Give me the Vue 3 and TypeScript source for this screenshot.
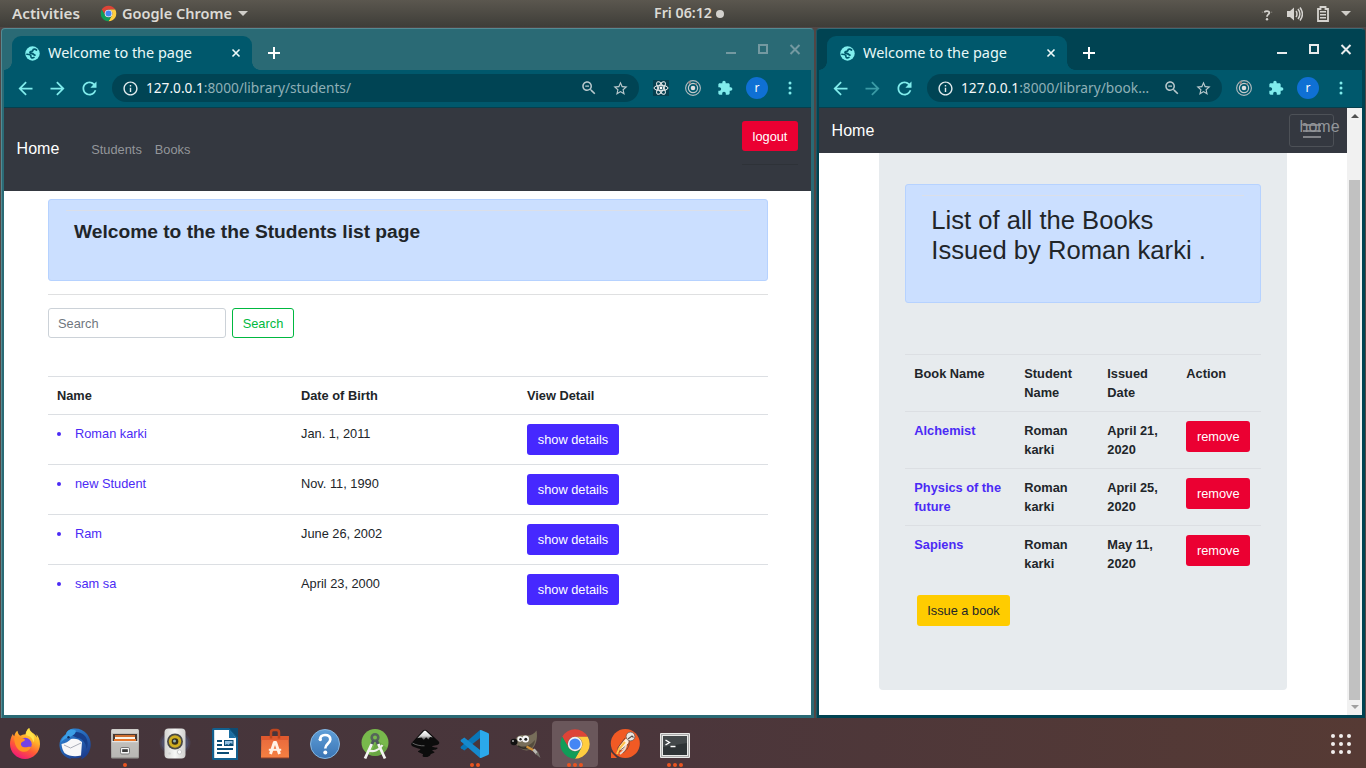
<script setup lang="ts">
interface BrowserWindow {
  kind: 'students' | 'books'
  path: string
  pathWidth: number
  active: boolean
}
interface Student { name: string; dob: string }
interface IssuedBook { title: string; date: string }
interface DockItem { icon: string; running: number; focused?: boolean }

const windows: BrowserWindow[] = [
  { kind: 'students', path: ':8000/library/students/', pathWidth: 205, active: false },
  { kind: 'books', path: ':8000/library/book…', pathWidth: 188, active: true },
]

const students: Student[] = [
  { name: 'Roman karki', dob: 'Jan. 1, 2011' },
  { name: 'new Student', dob: 'Nov. 11, 1990' },
  { name: 'Ram', dob: 'June 26, 2002' },
  { name: 'sam sa', dob: 'April 23, 2000' },
]

const books: IssuedBook[] = [
  { title: 'Alchemist', date: 'April 21, 2020' },
  { title: 'Physics of the future', date: 'April 25, 2020' },
  { title: 'Sapiens', date: 'May 11, 2020' },
]

const dock: DockItem[] = [
  { icon: 'firefox', running: 0 },
  { icon: 'thunderbird', running: 0 },
  { icon: 'files', running: 1 },
  { icon: 'rhythmbox', running: 0 },
  { icon: 'writer', running: 0 },
  { icon: 'software', running: 0 },
  { icon: 'help', running: 0 },
  { icon: 'studio', running: 0 },
  { icon: 'inkscape', running: 0 },
  { icon: 'vscode', running: 2 },
  { icon: 'gimp', running: 0 },
  { icon: 'chrome', running: 3, focused: true },
  { icon: 'postman', running: 0 },
  { icon: 'terminal', running: 3 },
]
</script>

<template>
  <div class="screen">
    <svg class="defs" width="0" height="0" aria-hidden="true">
      <defs>
        <linearGradient id="ffBody" x1="0.8" y1="0" x2="0.3" y2="1">
          <stop offset="0" stop-color="#fff14a" /><stop offset="0.35" stop-color="#ffb02a" />
          <stop offset="0.65" stop-color="#ff5a36" /><stop offset="1" stop-color="#f0147c" />
        </linearGradient>
        <linearGradient id="tbBody" x1="0" y1="0" x2="0.6" y2="1">
          <stop offset="0" stop-color="#2f8fe0" /><stop offset="1" stop-color="#1d3f8f" />
        </linearGradient>
        <linearGradient id="cabinet" x1="0" y1="0" x2="0" y2="1">
          <stop offset="0" stop-color="#c9c8c5" /><stop offset="1" stop-color="#9c9a97" />
        </linearGradient>
        <linearGradient id="speaker" x1="0" y1="0" x2="1" y2="0">
          <stop offset="0" stop-color="#d4d4d2" /><stop offset="0.5" stop-color="#f7f7f6" /><stop offset="1" stop-color="#d0d0ce" />
        </linearGradient>
        <linearGradient id="bag" x1="0" y1="0" x2="0" y2="1">
          <stop offset="0" stop-color="#e8683c" /><stop offset="1" stop-color="#f58042" />
        </linearGradient>
        <linearGradient id="helpBlue" x1="0" y1="0" x2="0" y2="1">
          <stop offset="0" stop-color="#5f9fd8" /><stop offset="1" stop-color="#3a74b4" />
        </linearGradient>
        <linearGradient id="mountain" x1="0" y1="0" x2="0" y2="1">
          <stop offset="0" stop-color="#ffffff" /><stop offset="0.55" stop-color="#d8d8d8" /><stop offset="1" stop-color="#3a3a3a" />
        </linearGradient>
      </defs>

      <symbol id="chrome" viewBox="0 0 48 48">
        <path fill="#dd4437" d="M24 13H43.05A22 22 0 0 0 4.95 13L14.47 29.5A11 11 0 0 1 24 13z" />
        <path fill="#ffcd40" d="M43.05 13H24A11 11 0 0 1 33.53 29.5L24 46A22 22 0 0 0 43.05 13z" />
        <path fill="#109d58" d="M4.95 13A22 22 0 0 0 24 46L33.53 29.5A11 11 0 0 1 14.47 29.5z" />
        <circle cx="24" cy="24" r="10.8" fill="#f1f1f1" />
        <circle cx="24" cy="24" r="8.4" fill="#4486f4" />
      </symbol>

      <symbol id="globe" viewBox="0 0 16 16">
        <circle cx="8" cy="8" r="7.7" fill="#80eeee" />
        <path d="M12.300 4.300C10.800 3 8.600 3 8.400 4.700c-.2 1.500-2.400.8-3 1.900-.4 1 .5 1.300 2 1.400 1.800.1 1.700 1.600 3.200 1.700" fill="none" stroke="#00586c" stroke-width="1.900" stroke-linecap="round" />
        <path d="M2 8.800c1.600.1 3.600.2 4.100 1.200.4.900-.1 1.700.7 2.300.7.500 2 .3 2.800-.2" fill="none" stroke="#00586c" stroke-width="1.700" stroke-linecap="round" />
      </symbol>
      <symbol id="back" viewBox="0 0 24 24"><path d="M20 11H7.83l5.59-5.59L12 4l-8 8 8 8 1.41-1.41L7.83 13H20v-2z" /></symbol>
      <symbol id="forward" viewBox="0 0 24 24"><path d="M4 11h12.17l-5.59-5.59L12 4l8 8-8 8-1.41-1.41L16.17 13H4v-2z" /></symbol>
      <symbol id="reload" viewBox="0 0 24 24"><path d="M17.65 6.35C16.2 4.9 14.21 4 12 4c-4.42 0-7.99 3.58-7.99 8s3.57 8 7.99 8c3.73 0 6.84-2.55 7.73-6h-2.08c-.82 2.33-3.04 4-5.65 4-3.31 0-6-2.69-6-6s2.69-6 6-6c1.66 0 3.14.69 4.22 1.78L13 11h7V4l-2.35 2.35z" /></symbol>
      <symbol id="info" viewBox="0 0 24 24"><path d="M11 17h2v-6h-2v6zm1-15C6.48 2 2 6.48 2 12s4.48 10 10 10 10-4.48 10-10S17.52 2 12 2zm0 18c-4.41 0-8-3.59-8-8s3.59-8 8-8 8 3.590 8 8-3.590 8-8 8zM11 9h2V7h-2v2z" /></symbol>
      <symbol id="zoomout" viewBox="0 0 24 24"><path d="M15.5 14h-.79l-.28-.27C15.41 12.59 16 11.11 16 9.5 16 5.91 13.09 3 9.5 3S3 5.91 3 9.5 5.91 16 9.5 16c1.61 0 3.09-.59 4.23-1.57l.27.28v.79l5 4.99L20.49 19l-4.99-5zm-6 0C7.01 14 5 11.99 5 9.5S7.01 5 9.5 5 14 7.01 14 9.5 11.99 14 9.5 14zM7 8.8h5v1.4H7z" /></symbol>
      <symbol id="star" viewBox="0 0 24 24"><path d="M22 9.24l-7.19-.62L12 2 9.19 8.63 2 9.24l5.46 4.73L5.82 21 12 17.27 18.18 21l-1.63-7.03L22 9.24zM12 15.4l-3.76 2.27 1-4.28-3.32-2.88 4.38-.38L12 6.1l1.71 4.04 4.38.38-3.32 2.88 1 4.28L12 15.4z" /></symbol>
      <symbol id="puzzle" viewBox="0 0 24 24"><path d="M20.5 11H19V7c0-1.1-.9-2-2-2h-4V3.5C13 2.12 11.88 1 10.5 1S8 2.12 8 3.5V5H4c-1.1 0-1.99.9-1.99 2v3.8H3.5c1.49 0 2.7 1.21 2.7 2.7s-1.21 2.7-2.7 2.7H2V20c0 1.1.9 2 2 2h3.8v-1.5c0-1.49 1.21-2.7 2.7-2.7 1.49 0 2.7 1.21 2.7 2.7V22H17c1.1 0 2-.9 2-2v-4h1.5c1.38 0 2.5-1.12 2.5-2.5S21.88 11 20.5 11z" /></symbol>
      <symbol id="react" viewBox="0 0 16 16">
        <rect width="16" height="16" fill="#063f4f" />
        <g fill="none" stroke="#f0f0f0" stroke-width="1">
          <ellipse cx="8" cy="8" rx="7" ry="2.7" />
          <ellipse cx="8" cy="8" rx="7" ry="2.7" transform="rotate(60 8 8)" />
          <ellipse cx="8" cy="8" rx="7" ry="2.7" transform="rotate(120 8 8)" />
        </g>
        <circle cx="8" cy="8" r="1.4" fill="#fff" />
      </symbol>
      <symbol id="rings" viewBox="0 0 16 16">
        <circle cx="8" cy="8" r="7.4" fill="none" stroke="#b3bcbf" stroke-width="1.1" />
        <circle cx="8" cy="8" r="4.6" fill="none" stroke="#c3c9cb" stroke-width="1.2" />
        <circle cx="8" cy="8" r="2.3" fill="#dedede" />
        <circle cx="4.6" cy="2.6" r="1.3" fill="#8f7f7e" /><circle cx="11" cy="4" r="1" fill="#8f7f7e" />
      </symbol>

      <symbol id="firefox" viewBox="0 0 32 32">
        <path fill="url(#ffBody)" d="M20.2 0c-2.7 2-3.4 4.3-3.7 6.2-2.2.1-3.8.7-5 1.6C9.600 6.700 8.700 5 8.500 2.700 6.500 4 5.600 6 5.300 8.200 4.200 7.500 3.900 6.500 3.900 5.800 1.600 9.600 1 13 1 16c0 8.300 6.700 15 15 15s15-6.700 15-15c0-4.500-1.700-8-3.600-9.800.3 1.200.4 2.300.3 3.200C25.600 4.800 21 4.500 20.200 0z" />
        <circle cx="16.200" cy="16.300" r="6.500" fill="#7542e5" />
        <path fill="#ff9324" d="M5.200 9c2.200-1 5-.4 6.500 1.100 2 .7 4 .3 4.200 1.600.2 1.500-3.300 1.700-3.900 3.700-.5 1.800 1 3.600 3.400 3.900 3 .4 4.500-1.200 6.900-.2-1.700 3.700-5 5.200-8.500 4.600C8.500 22.800 5 17 5.200 9z" />
        <path fill="#ffe34a" d="M20.200 0c-2.400 1.900-3.300 4.400-3 7.200 3.500.3 6.800 3 7 7.300 1.700-2.500 1.200-5.600.1-7.800C22.800 4.800 20.300 3.800 20.200 0z" />
      </symbol>
      <symbol id="thunderbird" viewBox="0 0 32 32">
        <path fill="url(#tbBody)" d="M10 2C16-1 24 1 28 6c4 5 5 12 2 18-1.500 3-4 5.500-8 7.500l1-3c-3 2-8 2.500-12 1l1.500 1.700C6 30 1 25 .5 18 .3 14 1.500 11 4 8.500 5 7.500 6 7 7 6c.5-1.800 1.500-3 3-4z" />
        <path fill="#173f8a" d="M10 6c5-3.500 12-2.500 16 2 3 4 3.500 9 1.500 13-.5-6-4-10.500-9-11z" />
        <path fill="#3b9fe6" d="M10.500 2c-2 .9-3.300 2.600-3.500 4.500C5 8.500 2.500 10.500 2 14c3-3.500 6.500-4 10-5.500 3-1.400 5-3.500 5-5.700-2-1.300-4.500-1.500-6.500-.8z" />
        <path fill="#f7f7f8" d="M2.500 16c4-.5 7-2.500 9.500-5 4-1 8 0 11 3l-1 13.500c-6 1.500-12 .8-16.500-2.500C3.800 22.500 2.800 19.500 2.500 16z" />
        <path fill="none" stroke="#a9adb8" d="m5 17 6.500 3L22 15" />
        <circle cx="9.500" cy="9.300" r="1.200" fill="#10305e" />
      </symbol>
      <symbol id="files" viewBox="0 0 32 32">
        <rect x="2" y="1" width="28" height="29.500" rx="1.500" fill="url(#cabinet)" />
        <path fill="#d5d4d1" d="M3 1.500h26V5H3z" />
        <rect x="4" y="6" width="24" height="8" fill="#4a3b34" />
        <path fill="#cf6f30" d="M6 7h20v3H6z" /><path fill="#f8f3e9" d="M6 9h20v2H6z" /><path fill="#e8772b" d="M5 11h22v2H5z" />
        <path fill="#c6c5c2" d="M3 14h26v15H3z" opacity=".65" /><path fill="#e6e5e3" d="M3 13h26v1.200H3z" />
        <rect x="11.500" y="19.500" width="9" height="6.500" rx="1.300" fill="#f5f5f5" stroke="#777" />
        <rect x="13.200" y="21.200" width="5.600" height="2.800" fill="#3a3a3a" />
      </symbol>
      <symbol id="rhythmbox" viewBox="0 0 32 32">
        <ellipse cx="16" cy="15" rx="15.500" ry="12" fill="#55587a" opacity=".3" />
        <ellipse cx="16" cy="15" rx="13.500" ry="10" fill="#55608a" opacity=".45" />
        <rect x="5.500" y=".5" width="21" height="30" rx="4" fill="url(#speaker)" />
        <circle cx="16" cy="13.500" r="8" fill="#4a4a46" />
        <circle cx="16" cy="13.500" r="6.200" fill="#cfae22" />
        <circle cx="16" cy="13.500" r="3.300" fill="#332e1e" /><circle cx="15.500" cy="13" r="1.500" fill="#91b0ae" />
        <circle cx="20.500" cy="24" r="2.200" fill="#fafafa" stroke="#cbcbcb" />
        <circle cx="10.500" cy="25.500" r="1.200" fill="#d2d2d2" />
      </symbol>
      <symbol id="writer" viewBox="0 0 32 32">
        <path fill="#12608f" d="M3 1.500A1.500 1.500 0 0 1 4.500 0H29v32H4.500A1.500 1.500 0 0 1 3 30.500z" />
        <path fill="#fff" d="M5.200 2H20l7 8v20H5.200z" />
        <path fill="#0e4c73" d="M20 0h9v10z" /><path fill="#1a6da2" d="M20 1v9h7z" />
        <path fill="#0b4c74" d="M8 12h5v2H8zm0 4h5v2H8zm0 4h16v2H8zm0 4h12v2H8zM15 12h9.500v6H15z" />
        <path fill="#94bfe0" d="M16 13h7.500v3l-2-1-2 2-1.500-1-2 1z" />
      </symbol>
      <symbol id="software" viewBox="0 0 32 32">
        <path fill="url(#bag)" d="M2.300 8h27.400L30 30H2z" />
        <path fill="#df592e" d="M2.300 8h27.400v4H2.200z" />
        <path fill="none" stroke="#bd461f" stroke-width="2.500" d="M12 10.500V4.500A2.500 2.500 0 0 1 14.500 2h3A2.500 2.500 0 0 1 20 4.500v6" />
        <path fill="none" stroke="#fff3e7" stroke-width="2.900" stroke-linejoin="round" d="M11.500 26 15.300 14.500h1.400L20.500 26" />
        <path stroke="#fff3e7" stroke-width="2" d="M9.800 21.800h12.400" /><path fill="#8f3f28" d="M2 29.500h28v1H2z" />
      </symbol>
      <symbol id="help" viewBox="0 0 32 32">
        <circle cx="16" cy="16" r="14.500" fill="url(#helpBlue)" stroke="#85b7e2" />
        <path fill="none" stroke="#fff" stroke-width="2.700" d="M11 12c-.2-3.500 2-5 5-5 3.300 0 5.300 1.800 5.300 4.400 0 4-5 4.200-5 9.100" />
        <circle cx="16.300" cy="24.500" r="2" fill="#fff" /><circle cx="11.300" cy="11.500" r="1.700" fill="#fff" />
      </symbol>
      <symbol id="studio" viewBox="0 0 32 32">
        <circle cx="16" cy="14.500" r="13.500" fill="#78b94c" />
        <path fill="#5c983c" d="M18 12 28.300 20A13.500 13.500 0 0 1 11 27z" opacity=".55" />
        <circle cx="16" cy="9.500" r="3.300" fill="none" stroke="#55655a" stroke-width="2.600" />
        <path stroke="#4e585c" stroke-width="3" d="M14.500 12.500 12.500 17M17.500 12.500 19.500 17" />
        <path fill="none" stroke="#f4f4f2" stroke-width="2.800" d="M12.700 16 6 30.500M19.300 16 26 30.500" />
        <path fill="none" stroke="#f0f2ee" stroke-width="2.300" d="M9 22c5 2.500 11 .5 14.500-5" />
      </symbol>
      <symbol id="inkscape" viewBox="0 0 32 32">
        <path fill="#0c0c0c" d="M14 2.500c1.200-.9 2.900-.9 4 0l11.500 10.800c1.500 1.500.8 3-1.300 3.600l-5 1.200c-1 .6 2 1.500 5.300 1.700.6 1.400-3 2.200-5 2.300-.7.500 1 1.300 2 1.800 0 1.300-3 1.200-3.800 2.300-.3 1.800-2.700 2.900-5.200 2.900-2.600 0-3.600-1.200-2.600-2.100 1.200-1-1.800-1.500-4.500-3.100-1.500-.9 2-1.700 2-2.500 0-1-6.500-1.600-8.500-3.700-1-1.100-1-2.200.1-3.300z" />
        <path fill="url(#mountain)" d="M14.800 3.300c.8-.6 1.600-.6 2.400 0l6.600 6.200-2.800-.4-1.600 2.300-2.300-2.200-2.300 2.800-2.300-2.400-4.300.7z" />
        <path fill="none" stroke="#777" stroke-width=".8" d="M3.500 15c3 2 8 3 12 2.800" />
      </symbol>
      <symbol id="vscode" viewBox="0 0 32 32">
        <path fill="#0876b8" d="M22 2v7.200L5.300 22.500 2 20.200c-.6-.5-.5-1.200 0-1.700L21 2z" />
        <path fill="#1689cc" d="M22 30v-7.200L5.300 9.500 2 11.800c-.6.5-.5 1.200 0 1.700L21 30z" />
        <path fill="#2ba9eb" d="M22 2l7 3c.6.300 1 .8 1 1.500v19c0 .7-.4 1.300-1 1.500l-7 3c-.7.200-1 0-1-.6V2.600c0-.6.300-.8 1-.6z" />
      </symbol>
      <symbol id="gimp" viewBox="0 0 32 32">
        <path fill="#776e5a" d="M8 9c3-2.500 7-2 10-1.500 4 .1 7-1.600 9.500-5C29 10 27 18 22.500 21c-5 3-10.500 1-14-3.500L4 15z" />
        <path fill="#554d3e" d="M9 17c4 2.500 11 2 17-5-.4 5-3 9-7 9.700-4 .6-8-1.200-10-4.700z" />
        <ellipse cx="5" cy="14" rx="3.500" ry="3.300" fill="#111" /><circle cx="4" cy="13" r="1" fill="#aaa" />
        <circle cx="11" cy="11" r="2.700" fill="#f5f5f5" /><circle cx="16.500" cy="11" r="3.500" fill="#f5f5f5" />
        <circle cx="11.500" cy="11.300" r="1.200" fill="#222" /><circle cx="16.800" cy="11.300" r="1.500" fill="#222" />
        <path fill="none" stroke="#302d28" stroke-width="1.500" d="M9 18c3 2.500 7 2.500 10 1.300" />
        <path stroke="#d29338" stroke-width="2" d="M17.500 18.500 25 22.500" /><path stroke="#bbbab3" stroke-width="3" d="m24.500 21.500 3.500 4" /><path fill="#77746c" d="m29 23.500 2.500 6.500-5-4z" />
      </symbol>
      <symbol id="postman" viewBox="0 0 32 32">
        <circle cx="16.300" cy="15.500" r="14.500" fill="#f15a24" /><path fill="#f15a24" d="M2 24v6h6z" />
        <path fill="none" stroke="#fff1de" stroke-width="5" stroke-linecap="round" d="m17.500 13.500-5 6" />
        <path fill="none" stroke="#5c4a40" stroke-width=".8" d="m16 10-7 9.500-.5 6 3-3.500 8-6M20 13c1 5-2 9-6 12" />
        <path fill="none" stroke="#ffc34d" stroke-width="2" d="m16 14-6 7-2 5" />
        <circle cx="21.500" cy="8.500" r="4.400" fill="#ebe6e0" stroke="#6b5a50" stroke-width=".8" /><path fill="none" stroke="#534c47" stroke-width="1.100" d="m19 11 4-3 1.500 1.500" />
        <path fill="none" stroke="#e4ddd5" stroke-width="1.800" d="M17 17c0 4-2 6-6 9" />
      </symbol>
      <symbol id="terminal" viewBox="0 0 32 32">
        <rect x="1" y="5" width="30" height="25" rx="1" fill="#e9e9e7" />
        <rect x="2.500" y="6.500" width="27" height="22" fill="none" stroke="#aaa" />
        <rect x="4" y="8" width="24" height="19" fill="#2e3335" /><path fill="#43484a" d="M4 8h24v7L4 19z" />
        <path fill="none" stroke="#fff" stroke-width="1.400" d="m6.500 12 4 2.500-4 2.500M11.500 18.500h5" />
      </symbol>
    </svg>

    <header class="topbar">
      <div class="topbar-left">
        <svg width="68" height="27"><text class="ui strong" x="0" y="19" textLength="68" lengthAdjust="spacingAndGlyphs">Activities</text></svg>
        <svg class="app-icon" width="17" height="17"><use href="#chrome" /></svg>
        <svg width="111" height="27"><text class="ui strong" x="0" y="19" textLength="110" lengthAdjust="spacingAndGlyphs">Google Chrome</text></svg>
        <i class="caret"></i>
      </div>
      <div class="clock">
        <svg width="59" height="27"><text class="ui strong" x="0" y="18" textLength="58" lengthAdjust="spacingAndGlyphs">Fri 06:12</text></svg>
        <i class="dot"></i>
      </div>
      <div class="tray">
        <svg class="question" width="12" height="16" viewBox="0 0 12 16">
          <path d="M3.700 5.500c0-2 4.600-2 4.600.3C8.300 7.500 6 7.300 6 9.800" fill="none" stroke="#d5d3cf" stroke-width="1.800" />
          <circle cx="6" cy="12.300" r="1.200" fill="#d5d3cf" /><path d="M.8 5.200h1.200M10 5.200h1.200" stroke="#85827b" />
        </svg>
        <svg class="volume" width="17" height="16" viewBox="0 0 17 16">
          <path fill="#d5d3cf" d="M1 5h3l4-3.500v13L4 11H1z" /><path fill="none" stroke="#d5d3cf" stroke-width="1.500" d="M10 5c1.300 1.500 1.300 4.500 0 6M12 3c2.300 3 2.300 7 0 10M14 1.500c3 4 3 9 0 13" />
        </svg>
        <svg class="battery" width="12" height="16" viewBox="0 0 12 16">
          <path fill="none" stroke="#d5d3cf" stroke-width="1.800" d="M1 3h2.500V1h5v2H11v12H1z" /><path fill="#d5d3cf" d="M3 5h6v1.600H3zm0 3h6v1.600H3zm0 3h6v1.600H3z" />
        </svg>
        <i class="caret"></i>
      </div>
    </header>

    <main class="desktop">
      <section v-for="win in windows" :key="win.kind" class="window" :class="[win.kind, { active: win.active }]">
        <div class="tabstrip">
          <div class="tab">
            <svg width="15" height="15"><use href="#globe" /></svg>
            <svg class="tab-title" width="146" height="30"><text class="ui" x="0" y="19.500" textLength="144" lengthAdjust="spacingAndGlyphs">Welcome to the page</text></svg>
            <svg width="10" height="10" viewBox="0 0 10 10"><path d="m1.500 1.500 7 7m0-7-7 7" stroke="#eefafa" stroke-width="1.600" /></svg>
          </div>
          <svg class="new-tab" width="12" height="12" viewBox="0 0 12 12"><path d="M6 0v12M0 6h12" stroke="#fff" stroke-width="2" /></svg>
          <svg class="controls" width="76" height="14" viewBox="0 0 76 14">
            <path d="M0 10h10" stroke="currentColor" stroke-width="2" />
            <rect x="33" y="2" width="8" height="8" fill="none" stroke="currentColor" stroke-width="2" />
            <path d="m64.500 2 9 9m0-9-9 9" stroke="currentColor" stroke-width="2" />
          </svg>
        </div>

        <div class="toolbar">
          <div class="slot nudge"><svg width="21" height="21"><use href="#back" /></svg></div>
          <div class="slot nudge" :class="{ faded: win.active }"><svg width="21" height="21"><use href="#forward" /></svg></div>
          <div class="slot nudge"><svg width="21" height="21"><use href="#reload" /></svg></div>
          <div class="omnibox">
            <svg class="info" width="17" height="17"><use href="#info" /></svg>
            <svg class="url" height="28">
              <text class="ui address" x="0" y="19" :textLength="win.pathWidth" lengthAdjust="spacingAndGlyphs">127.0.0.1<tspan class="path">{{ win.path }}</tspan></text>
            </svg>
            <div class="slot nudge"><svg width="18" height="18"><use href="#zoomout" /></svg></div>
            <div class="slot nudge"><svg width="17" height="17"><use href="#star" /></svg></div>
          </div>
          <div v-if="win.kind === 'students'" class="slot"><svg width="16" height="16"><use href="#react" /></svg></div>
          <div class="slot"><svg width="16" height="16"><use href="#rings" /></svg></div>
          <div class="slot"><svg width="16" height="16"><use href="#puzzle" /></svg></div>
          <div class="slot"><span class="avatar">r</span></div>
          <div class="slot menu"><svg width="4" height="14" viewBox="0 0 4 14"><circle cx="2" cy="2" r="1.500" /><circle cx="2" cy="7" r="1.500" /><circle cx="2" cy="12" r="1.500" /></svg></div>
        </div>

        <div v-if="win.kind === 'students'" class="page">
          <nav class="nav tall">
            <span class="brand">Home</span>
            <span class="link first">Students</span>
            <span class="link">Books</span>
            <div class="logout"><button class="btn danger">logout</button><hr></div>
          </nav>
          <div class="container">
            <div class="alert welcome"><hr><h4>Welcome to the the Students list page</h4></div>
            <hr class="rule">
            <form class="search" @submit.prevent>
              <input type="text" placeholder="Search">
              <button class="btn outline">Search</button>
            </form>
            <div class="table">
              <div class="row head"><span>Name</span><span>Date of Birth</span><span>View Detail</span></div>
              <div v-for="s in students" :key="s.name" class="row">
                <span class="name"><i class="bullet"></i>{{ s.name }}</span>
                <span>{{ s.dob }}</span>
                <span><button class="btn primary">show details</button></span>
              </div>
            </div>
          </div>
        </div>

        <div v-else class="page split">
          <div class="view">
            <nav class="nav">
              <span class="brand">Home</span>
              <div class="toggler">
                <svg width="20" height="16" viewBox="0 0 20 16"><path d="M1 2h18M1 8h18M1 14h18" stroke="#9a9ca0" stroke-width="1.600" /></svg>
                <span class="toggler-text">home</span>
              </div>
            </nav>
            <div class="jumbotron">
              <div class="alert issued"><hr><h2>List of all the Books<br>Issued by Roman karki .</h2></div>
              <div class="table issued-table">
                <div class="row head"><span>Book Name</span><span>Student Name</span><span>Issued Date</span><span>Action</span></div>
                <div v-for="b in books" :key="b.title" class="row">
                  <span class="title">{{ b.title }}</span>
                  <span>Roman karki</span>
                  <span>{{ b.date }}</span>
                  <span><button class="btn danger">remove</button></span>
                </div>
              </div>
              <button class="btn warning">Issue a book</button>
            </div>
          </div>
          <div class="scrollbar">
            <i class="up"></i><div class="thumb"></div><i class="down"></i>
          </div>
        </div>
      </section>
    </main>

    <footer class="dock">
      <div v-for="item in dock" :key="item.icon" class="dock-item">
        <div class="tile" :class="{ focused: item.focused }">
          <svg width="32" height="32"><use :href="'#' + item.icon" /></svg>
          <div class="pips"><i v-for="n in item.running" :key="n"></i></div>
        </div>
      </div>
      <div class="apps"><i v-for="n in 9" :key="n"></i></div>
    </footer>
  </div>
</template>

<style>
body { margin: 0; overflow: hidden; background: #463a3b; }
</style>

<style scoped>
* { box-sizing: border-box; }
svg { display: block; flex: none; }
.defs { position: absolute; }
.screen { width: 1366px; height: 768px; display: flex; flex-direction: column; overflow: hidden; font-family: "Liberation Sans", Arial, sans-serif; font-size: 12.8px; color: #212529; background: #514645; }
.ui { font-family: "Noto Sans", "Open Sans", sans-serif; font-size: 14.5px; fill: #e8f8f8; }
.ui.strong { font-size: 14px; font-weight: 600; fill: #dcdad5; }

.topbar { height: 27px; flex: none; display: flex; align-items: center; background: linear-gradient(#5b574f, #3e3d38); }
.topbar-left { width: 654px; display: flex; align-items: center; padding-left: 12px; }
.app-icon { margin: 0 5px 0 20px; }
.caret { width: 0; height: 0; border: 5px solid transparent; border-top-color: #d0cec9; border-bottom: 0; }
.topbar-left .caret { margin-left: 5px; }
.clock { flex: 1; display: flex; align-items: center; }
.dot { width: 8px; height: 8px; border-radius: 50%; background: #d3d1cd; margin-left: 3px; }
.tray { display: flex; align-items: center; padding-right: 15px; }
.question { margin-top: 2px; }
.volume { margin-left: 13px; }
.battery { margin: 0 12px 0 14px; }

.desktop { height: 691px; flex: none; display: flex; gap: 2px; padding: 1px 1px 0; }
.window { --frame: #2a6a75; height: 690px; border: 1px solid #548b94; border-right-color: var(--frame); border-bottom: 0; padding: 0 2px 3px; border-radius: 4px 4px 0 0; display: flex; flex-direction: column; background: var(--frame); width: 813px; }
.window.active { --frame: #004352; width: 549px; border-top-color: #3a6b76; border-left-color: #1d5562; }
.tabstrip { height: 41px; flex: none; display: flex; align-items: flex-start; padding: 7px 6px 0 8px; }
.tab { position: relative; width: 240px; height: 34px; background: #00586c; border-radius: 9px 9px 0 0; display: flex; align-items: center; padding: 0 11px 0 12.500px; }
.tab::before, .tab::after { content: ""; position: absolute; bottom: 0; width: 8px; height: 8px; }
.tab::before { left: -8px; background: radial-gradient(circle at 0 0, transparent 7.500px, #00586c 8px); }
.tab::after { right: -8px; background: radial-gradient(circle at 100% 0, transparent 7.500px, #00586c 8px); }
.tab-title { margin: 0 auto 0 8.500px; }
.new-tab { margin: 11px auto 0 16px; }
.controls { color: #7499a1; margin: 7px 3px 0 0; }
.active .controls { color: #e8eced; }

.toolbar { height: 38px; flex: none; display: flex; align-items: center; padding: 0 6px 1px; background: #00586c; border-bottom: 1px solid #063f4d; fill: #80ecec; }
.slot { width: 32px; height: 28px; flex: none; display: flex; align-items: center; justify-content: center; }
.nudge { padding-right: 1px; }
.menu { padding-left: 1px; }
.faded { opacity: .45; }
.omnibox { flex: 1; min-width: 0; height: 28px; display: flex; align-items: center; margin: 0 6px; padding: 0 2px 0 9.500px; border-radius: 14px; background: #004454; fill: #b9c9cd; }
.info { fill: #e3ecee; margin-right: 7.500px; }
.url { flex: 1; min-width: 0; }
.address { font-size: 14px; fill: #f4f8f8; }
.path { fill: #8fb0b7; }
.avatar { width: 22px; height: 22px; flex: none; border-radius: 50%; background: #0f70d4; color: #fff; font: 12px/22px "Noto Sans", sans-serif; text-align: center; }

.page { height: 607px; flex: none; background: #fff; overflow: hidden; }
.nav { height: 45px; display: flex; align-items: center; padding-left: 12.600px; background: #343840; color: #fff; }
.tall { height: 83px; }
.brand { font-size: 16px; line-height: 24px; }
.tall .brand { margin-top: -1px; }
.link { color: #93969a; margin-left: 13px; }
.link.first { margin-left: 32px; }
.logout { width: 56px; margin: 13px 13px 0 auto; align-self: flex-start; }
.logout hr { border: 0; height: 1px; background: #2e3238; margin: 13px 0 0; }
hr { border: 0; height: 1px; margin: 0; background: #dfe0e1; }
.btn { display: block; border: 1px solid transparent; border-radius: 3px; height: 31px; padding: 0; font: 12.8px/19px "Liberation Sans", Arial, sans-serif; text-align: center; color: #fff; }
.danger { background: #eb0032; width: 64px; }
.logout .btn { width: 56px; height: 30px; }
.primary { background: #4628ff; width: 92px; }
.warning { background: #ffcc00; color: #212529; width: 93px; margin: 13px 0 0 12px; }
.outline { background: #fff; border-color: #00b840; color: #00b840; width: 62px; height: 30px; }

.container { padding: 8px 43px 0 44px; }
.alert { background: #cbdfff; border: 1px solid #b6d2ff; border-radius: 3px; }
.alert hr { background: #dbdfe8; }
.welcome { height: 82px; padding: 10px 17px; }
.welcome h4 { margin: 9px 0 0 8px; font-size: 19.200px; line-height: 23px; }
.rule { margin-top: 13px; }
.search { display: flex; gap: 6px; margin: 13px 0 38px; }
input { width: 178px; height: 30px; border: 1px solid #ccd2d8; border-radius: 3px; padding: 0 9px; font: 12.8px "Liberation Sans", Arial, sans-serif; outline: 0; }
input::placeholder { color: #6f777e; opacity: 1; }
.row { display: grid; grid-template-columns: 244px 226px 1fr; height: 50px; border-top: 1px solid #dcdfe3; padding: 9px 0 0 9px; line-height: 19px; }
.row.head { height: 38px; font-weight: bold; }
.name { color: #4b2af5; display: flex; align-items: center; height: 19px; }
.bullet { width: 4px; height: 4px; border-radius: 50%; background: #4b2af5; margin-right: 14px; }

.split { display: flex; }
.view { width: 528px; }
.toggler { position: relative; width: 45px; height: 33px; border: 1px solid #4d5157; border-radius: 3px; margin: 0 13px 0 auto; display: flex; align-items: center; justify-content: center; }
.toggler-text { position: absolute; left: 9.500px; top: 3px; font-size: 16px; line-height: 18px; color: #93969a; }
.jumbotron { width: 408px; height: 537px; margin: 0 60px; padding: 31px 26px 0; background: #e7ebee; border-radius: 0 0 4px 4px; }
.issued { height: 119px; padding: 10px 16px; }
.issued h2 { margin: 9px 0 0 9.300px; font-size: 25.600px; line-height: 30px; font-weight: 500; white-space: nowrap; }
.issued-table { margin-top: 51px; font-weight: bold; }
.issued-table .row, .issued-table .row.head { height: 57px; grid-template-columns: 110px 83px 79px 1fr; padding-left: 9.300px; }
.issued-table .row span { padding-right: 18px; }
.issued-table .row .title { color: #4b2af5; padding-right: 10px; }
.scrollbar { width: 15px; height: 607px; background: #f1f1f1; display: flex; flex-direction: column; align-items: center; padding: 6px 0 6px; }
.scrollbar i { width: 0; height: 0; border: 4px solid transparent; }
.scrollbar .up { border-top: 0; border-bottom-color: #505050; }
.scrollbar .down { border-bottom: 0; border-top-color: #a0a0a0; margin-top: 5px; }
.thumb { width: 11px; height: 520px; margin-top: 62px; background: #c1c1c1; flex: none; }

.dock { height: 50px; flex: none; display: flex; background: linear-gradient(90deg, #44353b, #4b363b 50%, #563a34); }
.dock-item { width: 50px; display: flex; justify-content: center; padding-top: 3px; }
.tile { position: relative; width: 46px; height: 46px; padding: 7px; border-radius: 4px; }
.focused { background: #6a575b; }
.pips { position: absolute; left: 0; right: 0; bottom: 0; display: flex; justify-content: center; gap: 2px; }
.pips i { width: 4px; height: 4px; border-radius: 50%; background: #e95420; }
.apps { display: grid; grid-template-columns: repeat(3, 4px); grid-auto-rows: 4px; gap: 4px; margin: 16px 15px 0 auto; }
.apps i { border-radius: 50%; background: #f2efee; }
</style>
